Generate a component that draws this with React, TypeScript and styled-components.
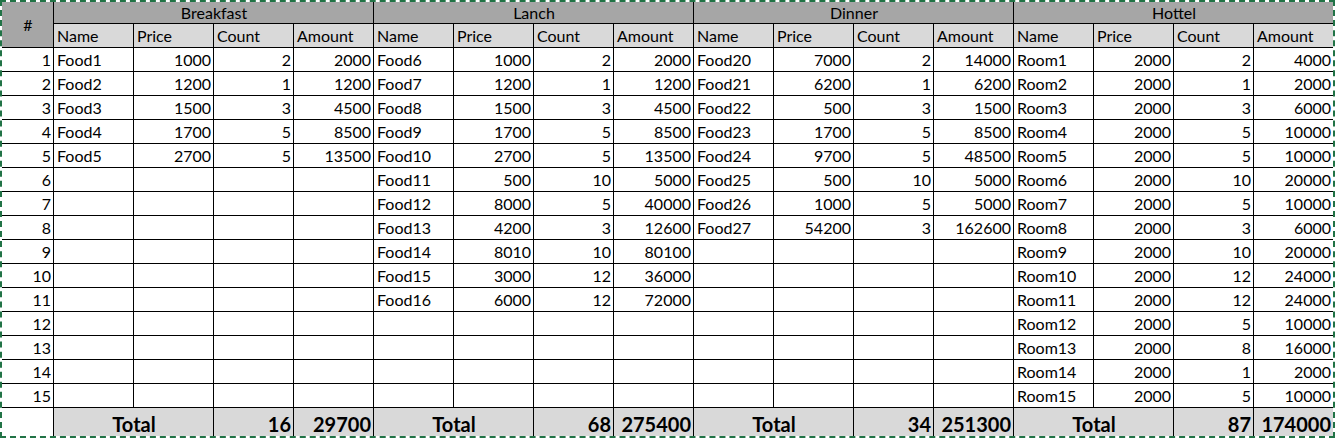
import React from "react";
import styled, { createGlobalStyle } from "styled-components";

const Global = createGlobalStyle`
  html, body { margin: 0; padding: 0; background: #ffffff; }
  body { font-family: "Lato", "Open Sans", sans-serif; color: #000; }
`;

type Row = [string, number, number, number];

const groups: { title: string; rows: Row[]; count: number; amount: number }[] = [
  {
    title: "Breakfast",
    rows: [
      ["Food1", 1000, 2, 2000],
      ["Food2", 1200, 1, 1200],
      ["Food3", 1500, 3, 4500],
      ["Food4", 1700, 5, 8500],
      ["Food5", 2700, 5, 13500],
    ],
    count: 16,
    amount: 29700,
  },
  {
    title: "Lanch",
    rows: [
      ["Food6", 1000, 2, 2000],
      ["Food7", 1200, 1, 1200],
      ["Food8", 1500, 3, 4500],
      ["Food9", 1700, 5, 8500],
      ["Food10", 2700, 5, 13500],
      ["Food11", 500, 10, 5000],
      ["Food12", 8000, 5, 40000],
      ["Food13", 4200, 3, 12600],
      ["Food14", 8010, 10, 80100],
      ["Food15", 3000, 12, 36000],
      ["Food16", 6000, 12, 72000],
    ],
    count: 68,
    amount: 275400,
  },
  {
    title: "Dinner",
    rows: [
      ["Food20", 7000, 2, 14000],
      ["Food21", 6200, 1, 6200],
      ["Food22", 500, 3, 1500],
      ["Food23", 1700, 5, 8500],
      ["Food24", 9700, 5, 48500],
      ["Food25", 500, 10, 5000],
      ["Food26", 1000, 5, 5000],
      ["Food27", 54200, 3, 162600],
    ],
    count: 34,
    amount: 251300,
  },
  {
    title: "Hottel",
    rows: [2, 1, 3, 5, 5, 10, 5, 3, 10, 12, 12, 5, 8, 1, 5].map(
      (c, i) => [`Room${i + 1}`, 2000, c, 2000 * c] as Row
    ),
    count: 87,
    amount: 174000,
  },
];

const Frame = styled.div`
  width: 1335px;
  height: 438px;
  box-sizing: border-box;
  border: 2px dashed #217346;
  overflow: hidden;
`;

const Sheet = styled.div`
  display: grid;
  grid-template-columns: 51px repeat(16, 79px);
  grid-template-rows: 21px 23px repeat(15, 23px) 29px;
  gap: 1px;
  background: #000;
  font-size: 16px;
`;

const Cell = styled.div<{ $align?: "left" | "right" | "center" }>`
  background: #fff;
  display: flex;
  align-items: center;
  justify-content: ${(p) =>
    p.$align === "right" ? "flex-end" : p.$align === "center" ? "center" : "flex-start"};
  padding: 1px 2px 0 3px;
  white-space: nowrap;
  overflow: hidden;
  line-height: 1;
`;

const Corner = styled(Cell)`
  grid-row: 1 / span 2;
  background: #a6a6a6;
  font-size: 16px;
`;

const GroupHead = styled(Cell)`
  grid-column: span 4;
  background: #a6a6a6;
`;

const SubHead = styled(Cell)`
  background: #d9d9d9;
`;

const TotalBlank = styled(Cell)``;

const TotalCell = styled(Cell)<{ $span?: number }>`
  background: #d9d9d9;
  font-weight: 700;
  font-size: 20px;
  grid-column: span ${(p) => p.$span ?? 1};
  padding-top: 3px;
`;

export default function App() {
  const cols = ["Name", "Price", "Count", "Amount"];
  return (
    <>
      <Global />
      <Frame>
        <Sheet>
          <Corner $align="center">#</Corner>
          {groups.map((g) => (
            <GroupHead key={g.title} $align="center">
              {g.title}
            </GroupHead>
          ))}
          {groups.map((g) =>
            cols.map((c) => <SubHead key={g.title + c}>{c}</SubHead>)
          )}
          {Array.from({ length: 15 }).map((_, r) => (
            <React.Fragment key={r}>
              <Cell $align="right">{r + 1}</Cell>
              {groups.map((g) => {
                const row = g.rows[r];
                return (
                  <React.Fragment key={g.title}>
                    <Cell>{row ? row[0] : ""}</Cell>
                    <Cell $align="right">{row ? row[1] : ""}</Cell>
                    <Cell $align="right">{row ? row[2] : ""}</Cell>
                    <Cell $align="right">{row ? row[3] : ""}</Cell>
                  </React.Fragment>
                );
              })}
            </React.Fragment>
          ))}
          <TotalBlank />
          {groups.map((g) => (
            <React.Fragment key={g.title}>
              <TotalCell $span={2} $align="center">Total</TotalCell>
              <TotalCell $align="right">{g.count}</TotalCell>
              <TotalCell $align="right">{g.amount}</TotalCell>
            </React.Fragment>
          ))}
        </Sheet>
      </Frame>
    </>
  );
}
